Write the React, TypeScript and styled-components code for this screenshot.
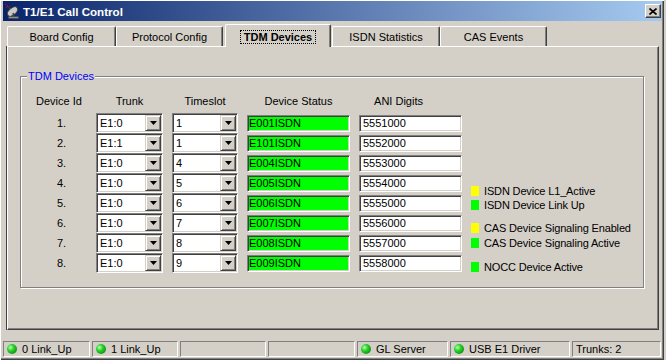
import React from 'react';
import styled, { createGlobalStyle } from 'styled-components';

const GlobalStyle = createGlobalStyle`
  html, body {
    margin: 0;
    padding: 0;
    background: #d4d0c8;
  }
  body {
    font-family: "Liberation Sans", Arial, sans-serif;
    font-size: 11px;
    color: #000;
  }
`;

const Window = styled.div`
  width: 664px;
  height: 360px;
  box-sizing: border-box;
  padding-bottom: 3px;
  background: #d4d0c8;
  display: flex;
  flex-direction: column;
  box-shadow: inset 1px 1px 0 #fff, inset -1px -1px 0 #404040, inset -2px -2px 0 #808080;
`;

const TitleBar = styled.div`
  margin: 1px 2px 0 3px;
  height: 20px;
  padding: 0 1px;
  display: flex;
  align-items: center;
  background: linear-gradient(to right, #0a246a, #a6caf0);
  color: #fff;
  font-weight: bold;
  font-size: 11.6px;
`;

const Title = styled.span`
  margin-left: 3px;
  flex: 1;
`;

const CloseButton = styled.div`
  width: 16px;
  height: 14px;
  box-sizing: border-box;
  display: flex;
  align-items: center;
  justify-content: center;
  background: #d4d0c8;
  border: 1px solid;
  border-color: #fff #404040 #404040 #fff;
  box-shadow: inset -1px -1px 0 #808080;
`;

const TabStrip = styled.div`
  margin: 3px 0 0 7px;
  height: 22px;
  display: flex;
  align-items: flex-end;
`;

const Tab = styled.div<{ $w: number; $active?: boolean }>`
  position: relative;
  z-index: ${(p) => (p.$active ? 2 : 0)};
  width: ${(p) => p.$w}px;
  height: ${(p) => (p.$active ? 23 : 20)}px;
  margin: ${(p) => (p.$active ? '0 1px -1px 2px' : '0')};
  box-sizing: border-box;
  display: flex;
  align-items: center;
  justify-content: center;
  padding-top: ${(p) => (p.$active ? 1 : 0)}px;
  background: #d4d0c8;
  border-top: 1px solid #fff;
  border-left: 1px solid #fff;
  border-right: 1px solid #404040;
  border-radius: 2px 2px 0 0;
  box-shadow: inset -1px 0 0 #808080;
  font-weight: ${(p) => (p.$active ? 'bold' : 'normal')};
`;

const FocusText = styled.span`
  padding: 0 3px;
  line-height: 12px;
  border: 1px dotted #000;
`;

const Panel = styled.div`
  margin-left: 7px;
  width: 652px;
  height: 284px;
  box-sizing: border-box;
  border: 1px solid;
  border-color: #fff #404040 #404040 #fff;
  box-shadow: inset -1px -1px 0 #808080, -1px 0 0 #404040;
  padding: 29px 0 0 12px;
`;

const GroupBox = styled.div`
  position: relative;
  width: 624px;
  height: 212px;
  box-sizing: border-box;
  border: 1px solid #808080;
  box-shadow: inset 1px 1px 0 #fff, 1px 1px 0 #fff;
  padding: 18px 0 0 10px;
`;

const GroupLegend = styled.span`
  position: absolute;
  top: -7px;
  left: 6px;
  padding: 0 1px;
  line-height: 13px;
  background: #d4d0c8;
  color: #0000ff;
`;

const Grid = styled.div`
  display: grid;
  grid-template-columns: 56px 67px 66px 103px 103px 1fr;
  grid-template-rows: 18px repeat(8, 20px);
  column-gap: 9px;
`;

const Header = styled.div<{ $shift?: number }>`
  line-height: 13px;
  text-align: center;
  padding-right: ${(p) => p.$shift ?? 0}px;
  white-space: nowrap;
`;

const RowNum = styled.div`
  line-height: 20px;
  text-align: center;
  padding-left: 5px;
`;

const Sunken = styled.div`
  box-sizing: border-box;
  border: 1px solid;
  border-color: #808080 #fff #fff #808080;
  box-shadow: inset 1px 1px 0 #404040, inset -1px -1px 0 #d4d0c8;
`;

const Combo = styled(Sunken)`
  height: 20px;
  display: flex;
  align-items: center;
  background: #fff;
  padding: 1px 1px 1px 3px;
`;

const ComboText = styled.span`
  flex: 1;
  line-height: 16px;
`;

const DropButton = styled.div`
  width: 16px;
  height: 16px;
  box-sizing: border-box;
  display: flex;
  align-items: center;
  justify-content: center;
  background: #d4d0c8;
  border: 1px solid;
  border-color: #d4d0c8 #404040 #404040 #d4d0c8;
  box-shadow: inset 1px 1px 0 #fff, inset -1px -1px 0 #808080;
`;

const Field = styled(Sunken)<{ $bg: string }>`
  height: 17px;
  margin-top: 2px;
  padding: 0 0 0 ${(p) => (p.$bg === '#fff' ? 3 : 1)}px;
  background: ${(p) => p.$bg};
  line-height: 15px;
`;

const LegendCol = styled.div`
  grid-column: 6;
  grid-row: 2 / span 8;
  padding-top: 71px;
  display: flex;
  flex-direction: column;
  letter-spacing: -0.15px;
`;

const LegendItem = styled.div<{ $gap?: number }>`
  display: flex;
  align-items: center;
  height: 15px;
  margin-top: ${(p) => p.$gap ?? 0}px;
  white-space: nowrap;
`;

const Swatch = styled.span<{ $color: string }>`
  width: 8px;
  height: 10px;
  margin-right: 5px;
  background: ${(p) => p.$color};
`;

const StatusBar = styled.div`
  margin: auto 0 0 3px;
  height: 16px;
  display: flex;
  gap: 2px;
`;

const StatusPanel = styled.div<{ $w: number }>`
  width: ${(p) => p.$w}px;
  box-sizing: border-box;
  display: flex;
  align-items: center;
  padding-left: 3px;
  border: 1px solid;
  border-color: #808080 #fff #fff #808080;
  white-space: nowrap;
`;

const Led = styled.span`
  width: 10px;
  height: 10px;
  margin-right: 5px;
  border-radius: 50%;
  background: radial-gradient(circle at 35% 35%, #b8ffb8 0, #2ad42a 35%, #0a7a0a 90%);
`;

const rows = [
  { trunk: 'E1:0', slot: '1', status: 'E001ISDN', ani: '5551000' },
  { trunk: 'E1:1', slot: '1', status: 'E101ISDN', ani: '5552000' },
  { trunk: 'E1:0', slot: '4', status: 'E004ISDN', ani: '5553000' },
  { trunk: 'E1:0', slot: '5', status: 'E005ISDN', ani: '5554000' },
  { trunk: 'E1:0', slot: '6', status: 'E006ISDN', ani: '5555000' },
  { trunk: 'E1:0', slot: '7', status: 'E007ISDN', ani: '5556000' },
  { trunk: 'E1:0', slot: '8', status: 'E008ISDN', ani: '5557000' },
  { trunk: 'E1:0', slot: '9', status: 'E009ISDN', ani: '5558000' },
];

const legend = [
  { color: '#ffff00', text: 'ISDN Device L1_Active', gap: 0 },
  { color: '#00ff00', text: 'ISDN Device Link Up', gap: 1 },
  { color: '#ffff00', text: 'CAS Device Signaling Enabled', gap: 10 },
  { color: '#00ff00', text: 'CAS Device Signaling Active', gap: 2 },
  { color: '#00ff00', text: 'NOCC Device Active', gap: 11 },
];

const tabs = [
  { label: 'Board Config', w: 109 },
  { label: 'Protocol Config', w: 107 },
  { label: 'TDM Devices', w: 106, active: true },
  { label: 'ISDN Statistics', w: 108 },
  { label: 'CAS Events', w: 107 },
];

const status = [
  { label: '0 Link_Up', w: 87, led: true },
  { label: '1 Link_Up', w: 86, led: true },
  { label: '', w: 86 },
  { label: '', w: 87 },
  { label: 'GL Server', w: 91, led: true },
  { label: 'USB E1 Driver', w: 120, led: true },
  { label: 'Trunks: 2', w: 89 },
];

function DishIcon() {
  return (
    <svg width="16" height="16" viewBox="0 0 16 16">
      <g fill="#e00000">
        <rect x="1" y="1" width="1" height="1" />
        <rect x="3" y="2" width="1" height="1" />
        <rect x="2" y="4" width="1" height="1" />
        <rect x="5" y="3" width="1" height="1" />
      </g>
      <line x1="3" y1="3" x2="8" y2="8" stroke="#404040" strokeWidth="1" />
      <ellipse cx="8.5" cy="8.5" rx="6" ry="3.5" transform="rotate(-40 8.5 8.5)" fill="#c8c8c8" stroke="#404040" />
      <line x1="9" y1="10" x2="10" y2="13.5" stroke="#404040" strokeWidth="1.5" />
      <rect x="4.5" y="13.5" width="10" height="2" fill="#909090" stroke="#404040" strokeWidth="0.6" />
    </svg>
  );
}

function CloseGlyph() {
  return (
    <svg width="8" height="7" viewBox="0 0 8 7">
      <path d="M0.5 0.5 L7.5 6.5 M7.5 0.5 L0.5 6.5" stroke="#000" strokeWidth="1.6" fill="none" />
    </svg>
  );
}

function Arrow() {
  return (
    <svg width="7" height="4" viewBox="0 0 7 4">
      <polygon points="0,0 7,0 3.5,4" fill="#000" />
    </svg>
  );
}

function ComboBox({ value }: { value: string }) {
  return (
    <Combo>
      <ComboText>{value}</ComboText>
      <DropButton>
        <Arrow />
      </DropButton>
    </Combo>
  );
}

export default function App() {
  return (
    <>
      <GlobalStyle />
      <Window>
        <TitleBar>
          <DishIcon />
          <Title>T1/E1 Call Control</Title>
          <CloseButton>
            <CloseGlyph />
          </CloseButton>
        </TitleBar>
        <TabStrip>
          {tabs.map((t) => (
            <Tab key={t.label} $w={t.w} $active={t.active}>
              {t.active ? <FocusText>{t.label}</FocusText> : t.label}
            </Tab>
          ))}
        </TabStrip>
        <Panel>
          <GroupBox>
            <GroupLegend>TDM Devices</GroupLegend>
            <Grid>
              <Header>Device Id</Header>
              <Header>Trunk</Header>
              <Header>Timeslot</Header>
              <Header>Device Status</Header>
              <Header $shift={24}>ANI Digits</Header>
              <div />
              {rows.map((r, i) => (
                <React.Fragment key={i}>
                  <RowNum>{i + 1}.</RowNum>
                  <ComboBox value={r.trunk} />
                  <ComboBox value={r.slot} />
                  <Field $bg="#00ff00">{r.status}</Field>
                  <Field $bg="#fff">{r.ani}</Field>
                  {i === 0 && (
                    <LegendCol>
                      {legend.map((l) => (
                        <LegendItem key={l.text} $gap={l.gap}>
                          <Swatch $color={l.color} />
                          {l.text}
                        </LegendItem>
                      ))}
                    </LegendCol>
                  )}
                </React.Fragment>
              ))}
            </Grid>
          </GroupBox>
        </Panel>
        <StatusBar>
          {status.map((s, i) => (
            <StatusPanel key={i} $w={s.w}>
              {s.led && <Led />}
              {s.label}
            </StatusPanel>
          ))}
        </StatusBar>
      </Window>
    </>
  );
}
